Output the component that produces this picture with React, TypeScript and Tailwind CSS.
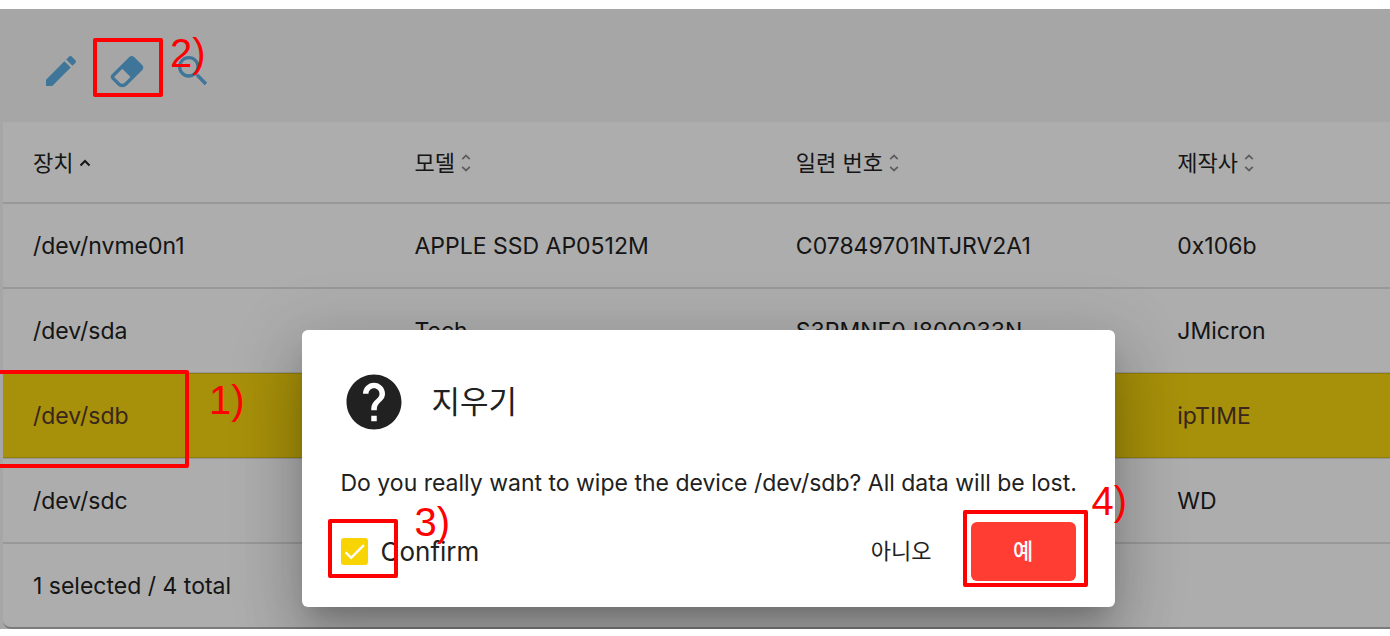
import { useState } from "react";
import { MdHelp } from "react-icons/md";
import { clsx } from "clsx";

const ICONS = {
  edit: "M20.71,7.04C21.1,6.65 21.1,6 20.71,5.63L18.37,3.29C18,2.9 17.35,2.9 16.96,3.29L15.12,5.12L18.87,8.87M3,17.25V21H6.75L17.81,9.93L14.06,6.18L3,17.25Z",
  wipe: "M16.24,3.56L21.19,8.5C21.97,9.29 21.97,10.55 21.19,11.34L12,20.53C10.44,22.09 7.91,22.09 6.34,20.53L2.81,17C2.03,16.21 2.03,14.95 2.81,14.16L13.41,3.56C14.2,2.78 15.46,2.78 16.24,3.56M4.22,15.58L7.76,19.11C8.54,19.9 9.8,19.9 10.59,19.11L14.12,15.58L9.17,10.63L4.22,15.58Z",
  scan: "M9.5,3A6.5,6.5 0 0,1 16,9.5C16,11.11 15.41,12.59 14.44,13.73L14.71,14H15.5L20.5,19L19,20.5L14,15.5V14.71L13.73,14.44C12.59,15.41 11.11,16 9.5,16A6.5,6.5 0 0,1 3,9.5A6.5,6.5 0 0,1 9.5,3M9.5,5C7,5 5,7 5,9.5C5,12 7,14 9.5,14C12,14 14,12 14,9.5C14,7 12,5 9.5,5Z",
};

const columns = ["장치", "모델", "일련 번호", "제작사"];

const devices = [
  {
    file: "/dev/nvme0n1",
    model: "APPLE SSD AP0512M",
    serial: "C07849701NTJRV2A1",
    vendor: "0x106b",
  },
  {
    file: "/dev/sda",
    model: "Tech",
    serial: "S3PMNF0J800033N",
    vendor: "JMicron",
  },
  { file: "/dev/sdb", model: "", serial: "", vendor: "ipTIME" },
  { file: "/dev/sdc", model: "", serial: "", vendor: "WD" },
];

function ToolbarButton({ label, path }: { label: string; path: string }) {
  return (
    <button type="button" aria-label={label} className="block text-[#5dade2]">
      <svg viewBox="0 0 24 24" className="size-10" fill="currentColor">
        <path d={path} />
      </svg>
    </button>
  );
}

function SortIcon({ active }: { active: boolean }) {
  if (active) {
    return (
      <svg width="12" height="8" viewBox="0 0 12 8" fill="none">
        <path d="M1.5 6.5 6 2l4.5 4.5" stroke="currentColor" strokeWidth="2" />
      </svg>
    );
  }
  return (
    <svg
      width="10"
      height="18"
      viewBox="0 0 10 18"
      fill="none"
      className="text-[#8c8c8c]"
    >
      <path
        d="M1.2 5.2 5 1.6l3.8 3.6M1.2 12.8 5 16.4l3.8-3.6"
        stroke="currentColor"
        strokeWidth="1.8"
      />
    </svg>
  );
}

// Red frame and step number laid over the control it points at
function Step({
  label,
  frame,
  text,
}: {
  label: string;
  frame: string;
  text: string;
}) {
  return (
    <>
      <span
        className={clsx(
          "pointer-events-none absolute z-30 rounded-[2px] border-4 border-[#ff0000]",
          frame
        )}
      />
      <span
        className={clsx(
          "pointer-events-none absolute z-30 font-['Liberation_Sans',Arial,sans-serif] text-[40px] leading-10 font-normal text-[#ff0000]",
          text
        )}
      >
        {label}
      </span>
    </>
  );
}

function DeviceTable({ selected }: { selected: string }) {
  return (
    <table className="w-full table-fixed border-collapse bg-white text-left">
      <colgroup>
        <col className="w-[27.5%]" />
        <col className="w-[27.5%]" />
        <col className="w-[27.5%]" />
        <col />
      </colgroup>
      <thead>
        <tr className="h-[81px] border-b-2 border-black/12">
          {columns.map((column, index) => (
            <th key={column} className="pt-0.5 pl-[30px] text-[22px] font-normal">
              <button type="button" className="flex items-center gap-1.5">
                {column}
                <SortIcon active={index === 0} />
              </button>
            </th>
          ))}
        </tr>
      </thead>
      <tbody>
        {devices.map((device) => (
          <tr
            key={device.file}
            className={clsx(
              "h-[85px] border-b-2 border-black/12",
              device.file === selected && "bg-[#f7d410] text-[#54382c]"
            )}
          >
            <td className="pt-0.5 pl-[30px]">{device.file}</td>
            <td className="pt-0.5 pl-[30px]">{device.model}</td>
            <td className="pt-0.5 pl-[30px]">{device.serial}</td>
            <td className="pt-0.5 pl-[30px]">{device.vendor}</td>
          </tr>
        ))}
      </tbody>
    </table>
  );
}

function WipeDialog({ device }: { device: string }) {
  const [confirmed, setConfirmed] = useState(true);

  return (
    <div
      role="dialog"
      aria-labelledby="dialog-title"
      className="relative w-[813px] rounded-md bg-white px-[39px] pt-[39px] pb-[26px] shadow-[0_16px_22px_-10px_rgba(0,0,0,0.2),0_36px_57px_5px_rgba(0,0,0,0.14),0_14px_69px_12px_rgba(0,0,0,0.12)]"
    >
      <div className="flex items-center gap-[25px]">
        <MdHelp className="size-[66px]" />
        <h2 id="dialog-title" className="text-[31px] leading-10">
          지우기
        </h2>
      </div>
      <p className="mt-8 leading-8 whitespace-nowrap">
        Do you really want to wipe the device {device}? All data will be lost.
      </p>
      <div className="mt-[23px] flex items-center justify-between">
        <div className="relative">
          <label className="flex items-center gap-[13px] text-[26px] leading-8">
            <span className="grid size-[27px] place-items-center">
              <input
                type="checkbox"
                checked={confirmed}
                onChange={(e) => setConfirmed(e.target.checked)}
                className="peer col-start-1 row-start-1 size-[27px] appearance-none rounded-[3px] border-2 border-[#757575] checked:border-[#f9d405] checked:bg-[#f9d405]"
              />
              <svg
                viewBox="0 0 24 24"
                fill="none"
                className="pointer-events-none invisible col-start-1 row-start-1 size-[27px] peer-checked:visible"
              >
                <path
                  d="M4.1 12.7 9 17.6 20.3 6.3"
                  stroke="#fff"
                  strokeWidth="2.1"
                />
              </svg>
            </span>
            Confirm
          </label>
          <Step
            label="3)"
            frame="-top-[17px] -left-[13px] h-[59px] w-[70px]"
            text="-top-[34px] left-[74px]"
          />
        </div>
        <div className="flex items-center gap-[39px]">
          <button type="button" className="text-[22px]">
            아니오
          </button>
          <div className="relative">
            <button
              type="button"
              className="block h-[59px] w-[105px] rounded-md bg-[#ff3d32] text-[22px] font-medium text-white"
            >
              예
            </button>
            <Step
              label="4)"
              frame="-top-3 -left-2 h-[77px] w-[125px]"
              text="-top-[41px] left-[121px]"
            />
          </div>
        </div>
      </div>
    </div>
  );
}

export default function App() {
  const [selected] = useState("/dev/sdb");

  return (
    <div className="overflow-hidden bg-white py-[9px] font-[Inter,'Noto_Sans_CJK_KR',sans-serif] text-[23px] text-[#212121]">
      <div className="relative bg-[#f5f5f5] pl-[3px]">
        <main className="rounded-bl-lg border-b-2 border-[#b5b5b5] bg-white">
          <div className="flex gap-[26px] bg-[#f5f5f5] px-[38px] pt-[42px] pb-[31px]">
            <ToolbarButton label="Edit" path={ICONS.edit} />
            <ToolbarButton label="Wipe" path={ICONS.wipe} />
            <ToolbarButton label="Scan" path={ICONS.scan} />
          </div>
          <DeviceTable selected={selected} />
          <footer className="flex h-[83px] items-center pt-0.5 pl-[30px]">
            1 selected / {devices.length} total
          </footer>
        </main>

        <div className="absolute inset-0 z-10 flex items-start justify-center overflow-hidden bg-black/32 pt-[321px] pl-[26px]">
          <WipeDialog device={selected} />
        </div>

        <Step
          label="1)"
          frame="top-[361px] -left-1 h-[98px] w-[193px]"
          text="top-[371px] left-[209px]"
        />
        <Step
          label="2)"
          frame="top-[29px] left-[93px] h-[59px] w-[70px]"
          text="top-6 left-[170px]"
        />
      </div>
    </div>
  );
}
